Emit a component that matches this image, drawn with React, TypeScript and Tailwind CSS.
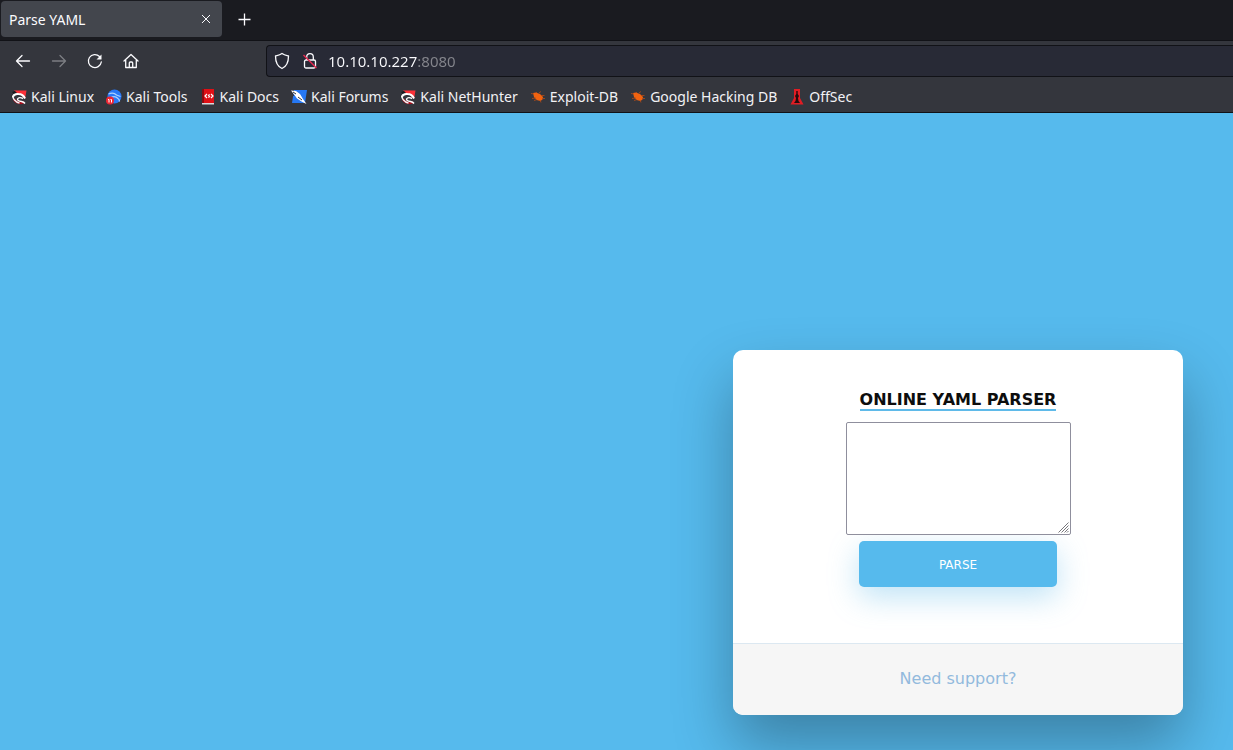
import type { ReactNode } from "react";

function DragonIcon() {
  return (
    <svg width="16" height="16" viewBox="0 0 16 16" aria-hidden="true">
      <path d="M3 1.500h12.500L14 10 10 6 5 4z" fill="#fb3038" />
      <path d="M1 3l3-1 2 2-3 1zM0 7l2-1v3H0z" fill="#17181c" />
      <path d="M3 10q2 4 7 4l3-1" stroke="#a80d1b" strokeWidth="2.500" fill="none" />
      <path d="M1.500 8.500Q3 4.500 7.500 5q4.500 0 6.500 4.500" stroke="#fff" strokeWidth="2" fill="none" />
      <path d="M3 5.500q-2 3 .5 5.500 2 2.500 5 3" stroke="#f4f4f6" strokeWidth="1.300" fill="none" />
      <path d="M12 9.500q-4-2-5.500.5 0 2 4 2.500 2.500.5 3.500 2" stroke="#fff" strokeWidth="1.400" fill="none" />
    </svg>
  );
}

function ToolsIcon() {
  return (
    <svg width="16" height="16" viewBox="0 0 16 16" aria-hidden="true">
      <circle cx="8.500" cy="7.500" r="7" fill="#2878f5" />
      <path d="M2.500 5q5-2 8 1l4 1.500M5 8.500q4-2 7 1 1.500 1 1.500 3" stroke="#a9d1ff" strokeWidth="1.300" fill="none" />
      <circle cx="4" cy="11.500" r="4" fill="#ee2633" />
      <path d="M2 10.500h1v3M4.500 10.500h1v3" stroke="#fff" strokeWidth="1" fill="none" />
    </svg>
  );
}

function DocsIcon() {
  return (
    <svg width="16" height="16" viewBox="0 0 16 16" aria-hidden="true">
      <path d="M2 0h12v14H2z" fill="#e01016" />
      <path d="M2 0h2v14H2z" fill="#8e0a0f" />
      <path d="M2 14h12v1.500H2z" fill="#d9d9dc" />
      <path d="M7 5L5 7l2 2M11 5l2 2-2 2" stroke="#fff" strokeWidth="1.200" fill="none" />
      <path d="M9.500 5L8 7h2L8.500 9" stroke="#fff" strokeWidth="1" fill="none" />
    </svg>
  );
}

function ForumsIcon() {
  return (
    <svg width="16" height="16" viewBox="0 0 16 16" aria-hidden="true">
      <path d="M3 1h13l-2 13H1z" fill="#2678f4" />
      <path d="M0 1.500l5 .5 4 3 3 5 3.500 5-5-2.500L6 9.500 3.500 6z" fill="#fff" />
      <path d="M2 3l3 2M0 3l3 4M7 8l4 3" stroke="#30333a" strokeWidth="1" />
    </svg>
  );
}

function BugIcon() {
  return (
    <svg width="16" height="16" viewBox="0 0 16 16" aria-hidden="true">
      <path d="M3 4l3-.5 4 1.500 3 3-.5 2.500-2 1.500-4-1L4 8z" fill="#f26310" />
      <path d="M1 4.500l3 .5M2 9.500l4-.5M6 3l1 1M9 4l2-1.500M11 6.500h3.500M12 9.500h3M10 11l1 2.500M7 10.500l-3 1" stroke="#b54b16" strokeWidth="0.800" />
    </svg>
  );
}

function OffSecIcon() {
  return (
    <svg width="16" height="16" viewBox="0 0 16 16" aria-hidden="true">
      <path d="M5 0h6v9l3.500 6.500h-13L5 9z" fill="#e31c23" />
      <path d="M7.300 2h1.400v3l1.300 2-1 2 .5 3 1.500 2H5l1.500-2L7 9 6 7l1.300-2z" fill="#260b0d" />
    </svg>
  );
}

const bookmarks: { label: string; icon: ReactNode }[] = [
  { label: "Kali Linux", icon: <DragonIcon /> },
  { label: "Kali Tools", icon: <ToolsIcon /> },
  { label: "Kali Docs", icon: <DocsIcon /> },
  { label: "Kali Forums", icon: <ForumsIcon /> },
  { label: "Kali NetHunter", icon: <DragonIcon /> },
  { label: "Exploit-DB", icon: <BugIcon /> },
  { label: "Google Hacking DB", icon: <BugIcon /> },
  { label: "OffSec", icon: <OffSecIcon /> },
];

function NavButton({ label, disabled, children }: { label: string; disabled?: boolean; children: ReactNode }) {
  return (
    <button
      type="button"
      aria-label={label}
      disabled={disabled}
      className="flex h-8 w-9 items-center justify-center text-[#fbfbfe] disabled:text-[#7c7e83]"
    >
      <svg
        width="16"
        height="16"
        viewBox="0 0 16 16"
        fill="none"
        stroke="currentColor"
        strokeWidth="1.300"
        strokeLinecap="round"
        strokeLinejoin="round"
        aria-hidden="true"
      >
        {children}
      </svg>
    </button>
  );
}

function TabStrip() {
  return (
    <div className="flex h-10 items-start bg-[#1a1b20] pt-px pl-px">
      <div className="flex h-9 w-[221px] items-center justify-between rounded bg-[#43464d] px-2 text-sm text-[#fbfbfe]">
        <span className="pt-0.5">Parse YAML</span>
        <button type="button" aria-label="Close tab" className="flex size-4 items-center justify-center">
          <svg width="10" height="10" viewBox="0 0 10 10" stroke="currentColor" strokeWidth="1" aria-hidden="true">
            <path d="M1 1l8 8M9 1l-8 8" />
          </svg>
        </button>
      </div>
      <button type="button" aria-label="New tab" className="ml-1 flex size-9 items-center justify-center text-[#fbfbfe]">
        <svg width="13" height="13" viewBox="0 0 13 13" stroke="currentColor" strokeWidth="1.300" aria-hidden="true">
          <path d="M6.500 .5v12M.5 6.500h12" />
        </svg>
      </button>
    </div>
  );
}

function Toolbar() {
  return (
    <div className="flex h-[41px] items-center border-t border-[#111217] pl-[5px]">
      <NavButton label="Back">
        <path d="M1.500 8h13M7 2.500L1.500 8 7 13.500" />
      </NavButton>
      <NavButton label="Forward" disabled>
        <path d="M1.500 8h13M9 2.500L14.500 8 9 13.500" />
      </NavButton>
      <NavButton label="Reload">
        <path d="M14.300 9A6.500 6.500 0 1 1 12.500 3.500" />
        <path d="M14.500 1.500v5h-5z" fill="currentColor" stroke="none" />
      </NavButton>
      <NavButton label="Home">
        <path d="M1 8l7-6.500L15 8M2.700 7v7.500h10.600V7M6.300 14.500V10a1 1 0 0 1 1-1h1.400a1 1 0 0 1 1 1v4.500" />
      </NavButton>
      <div className="ml-[117px] flex h-8 flex-1 items-center rounded-l border border-r-0 border-[#111217] bg-[#282a36] pl-[7px]">
        <svg width="16" height="18" viewBox="0 0 16 18" fill="none" stroke="#fbfbfe" strokeWidth="1.300" aria-hidden="true">
          <path
            d="M8 1.500C6 3 3.500 3.500 1.500 4c0 6 2 10.500 6.500 12.500C12.500 14.500 14.500 10 14.500 4 12.500 3.500 10 3 8 1.500z"
            strokeLinejoin="round"
          />
        </svg>
        <svg className="ml-3" width="16" height="18" viewBox="0 0 16 18" fill="none" stroke="#fbfbfe" strokeWidth="1.300" aria-hidden="true">
          <rect x="2.500" y="8" width="11" height="8" rx="1.500" />
          <path d="M4.700 8V5a3.300 3.300 0 0 1 6.600 0v3" />
          <path d="M1.500 3l13 13" stroke="#e22850" strokeWidth="1.500" />
        </svg>
        <input
          type="text"
          aria-label="Address"
          defaultValue="10.10.10.227:8080"
          className="ml-[10px] min-w-0 flex-1 bg-[linear-gradient(to_right,#fbfbfe_89px,#85868d_89px)] bg-clip-text text-[15px] text-transparent outline-none"
        />
      </div>
    </div>
  );
}

function BookmarksBar() {
  return (
    <nav className="flex h-8 items-center gap-3 border-b border-[#111217] pl-[11px]">
      {bookmarks.map(({ label, icon }) => (
        <a key={label} href="#" className="flex items-center gap-1 text-sm whitespace-nowrap text-[#f2f2f5]">
          {icon}
          {label}
        </a>
      ))}
    </nav>
  );
}

function ParserCard() {
  return (
    <section className="w-[450px] overflow-hidden rounded-[10px] bg-white text-center shadow-[0_30px_60px_0_rgba(0,0,0,0.3)]">
      <form className="flex flex-col items-center pt-10 pb-14" onSubmit={(e) => e.preventDefault()}>
        <h2 className="mb-[11px] border-b-2 border-[#5fbae9] text-base leading-[19px] font-semibold text-[#0d0d0d]">
          <label htmlFor="yaml">ONLINE YAML PARSER</label>
        </h2>
        <div className="relative flex">
          <textarea
            id="yaml"
            className="h-[113px] w-[225px] rounded-xs border border-[#8f8f9d] bg-white p-1 [&::-webkit-resizer]:bg-transparent"
          />
          <svg
            className="pointer-events-none absolute right-[2px] bottom-[2px]"
            width="11"
            height="11"
            viewBox="0 0 11 11"
            stroke="#77777c"
            aria-hidden="true"
          >
            <path d="M.5 10.500l10-10M3.500 10.500l7-7M6.500 10.500l4-4M9 10.500l1.500-1.500" />
          </svg>
        </div>
        <button
          type="submit"
          className="mt-[6px] h-[46px] w-[198px] rounded-[5px] bg-[#56baed] pt-0.5 text-xs text-white shadow-[0_10px_30px_0_rgba(95,186,233,0.4)]"
        >
          PARSE
        </button>
      </form>
      <footer className="border-t border-[#dce8f1] bg-[#f6f6f6] pt-[22px] pb-6 leading-[25px]">
        <a href="#" className="text-[#92badd]">
          Need support?
        </a>
      </footer>
    </section>
  );
}

export default function App() {
  return (
    <div className="flex min-h-screen flex-col">
      <header className="bg-[#34363d] font-['Noto_Sans',sans-serif]">
        <TabStrip />
        <Toolbar />
        <BookmarksBar />
      </header>
      <main className="flex flex-1 items-end justify-end overflow-hidden bg-[#56baed] pr-[50px] pb-[35px] font-['DejaVu_Sans',sans-serif]">
        <ParserCard />
      </main>
    </div>
  );
}
